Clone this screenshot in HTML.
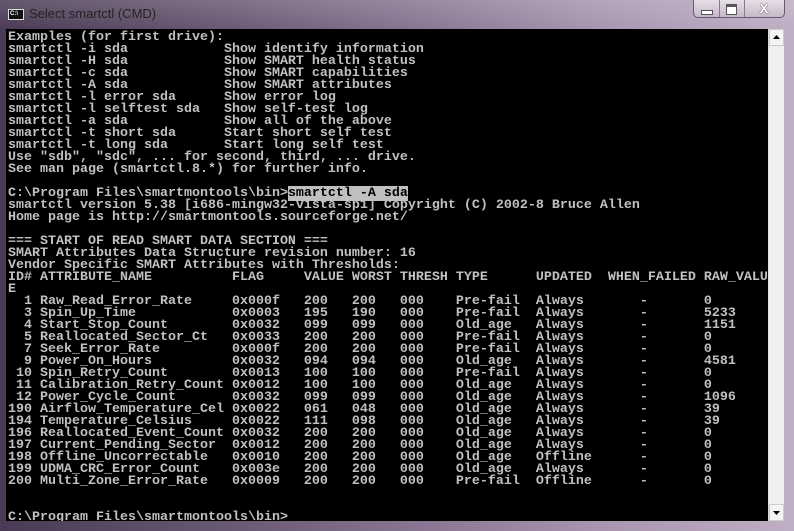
<!DOCTYPE html>
<html><head><meta charset="utf-8"><style>
html,body{margin:0;padding:0;width:794px;height:531px;overflow:hidden;background:#6a5670}
.frame{position:absolute;left:0;top:0;width:794px;height:531px;background:linear-gradient(90deg,#4a3a55 0%,#6b5a74 30%,#8c7894 55%,#a894ae 75%,#bfaec4 100%)}
.tb{position:absolute;left:0;top:0;width:794px;height:30px;background:linear-gradient(180deg,rgba(255,255,255,.15),rgba(255,255,255,0))}
.ico{position:absolute;left:8px;top:9px;width:16px;height:11px;background:#111;border:1px solid #ddd;box-sizing:border-box;color:#fff;font:bold 6px "Liberation Sans",sans-serif;line-height:9px;padding-left:1px}
.title{position:absolute;left:29px;top:6px;font:13px "Liberation Sans",sans-serif;color:#222}
.btns{position:absolute;left:693px;top:0;width:92px;height:18px;border:1px solid #6a5a70;border-top:none;border-radius:0 0 5px 5px;background:linear-gradient(180deg,#e8dfe9,#c5b7c8);box-sizing:border-box}
.btns div{position:absolute;top:0;height:17px;border-right:1px solid #8a7a8f}
.con{position:absolute;left:6px;top:29px;width:762px;height:492px;background:#000;overflow:hidden}
pre{margin:0;position:absolute;left:2px;top:3px;font-family:"Liberation Mono",monospace;font-weight:bold;font-size:13.33px;line-height:12px;color:#c0c0c0}
.hl{background:#c0c0c0;color:#000}
.sb{position:absolute;left:768px;top:29px;width:16px;height:492px;background:#f0f0f0;border-left:1px solid #ddd;box-sizing:border-box}
.ar{position:absolute;left:0;width:15px;height:17px;background:#f4f4f4;border:1px solid #ccc;box-sizing:border-box}
</style></head><body>
<div class="frame"></div><div class="tb"></div>
<div class="ico">C:\</div>
<div class="title">Select smartctl (CMD)</div>
<div class="btns"><div style="left:0;width:25px"><span style="position:absolute;left:7px;top:10px;width:10px;height:3px;background:#fff;border:1px solid #555"></span></div><div style="left:25px;width:25px"><span style="position:absolute;left:7px;top:4px;width:9px;height:7px;border:1px solid #555;border-top:3px solid #555;background:#fff"></span></div><div style="left:50px;width:40px;border:none;text-align:center;font:bold 13px 'Liberation Sans',sans-serif;color:#fff;text-shadow:0 0 1px #333,0 0 1px #333;line-height:17px">X</div></div>
<div class="con"><pre>Examples (for first drive):
smartctl -i sda            Show identify information
smartctl -H sda            Show SMART health status
smartctl -c sda            Show SMART capabilities
smartctl -A sda            Show SMART attributes
smartctl -l error sda      Show error log
smartctl -l selftest sda   Show self-test log
smartctl -a sda            Show all of the above
smartctl -t short sda      Start short self test
smartctl -t long sda       Start long self test
Use "sdb", "sdc", ... for second, third, ... drive.
See man page (smartctl.8.*) for further info.

C:\Program Files\smartmontools\bin&gt;<span class="hl">smartctl -A sda</span>
smartctl version 5.38 [i686-mingw32-vista-sp1] Copyright (C) 2002-8 Bruce Allen
Home page is http://smartmontools.sourceforge.net/

=== START OF READ SMART DATA SECTION ===
SMART Attributes Data Structure revision number: 16
Vendor Specific SMART Attributes with Thresholds:
ID# ATTRIBUTE_NAME          FLAG     VALUE WORST THRESH TYPE      UPDATED  WHEN_FAILED RAW_VALU
E
  1 Raw_Read_Error_Rate     0x000f   200   200   000    Pre-fail  Always       -       0
  3 Spin_Up_Time            0x0003   195   190   000    Pre-fail  Always       -       5233
  4 Start_Stop_Count        0x0032   099   099   000    Old_age   Always       -       1151
  5 Reallocated_Sector_Ct   0x0033   200   200   000    Pre-fail  Always       -       0
  7 Seek_Error_Rate         0x000f   200   200   000    Pre-fail  Always       -       0
  9 Power_On_Hours          0x0032   094   094   000    Old_age   Always       -       4581
 10 Spin_Retry_Count        0x0013   100   100   000    Pre-fail  Always       -       0
 11 Calibration_Retry_Count 0x0012   100   100   000    Old_age   Always       -       0
 12 Power_Cycle_Count       0x0032   099   099   000    Old_age   Always       -       1096
190 Airflow_Temperature_Cel 0x0022   061   048   000    Old_age   Always       -       39
194 Temperature_Celsius     0x0022   111   098   000    Old_age   Always       -       39
196 Reallocated_Event_Count 0x0032   200   200   000    Old_age   Always       -       0
197 Current_Pending_Sector  0x0012   200   200   000    Old_age   Always       -       0
198 Offline_Uncorrectable   0x0010   200   200   000    Old_age   Offline      -       0
199 UDMA_CRC_Error_Count    0x003e   200   200   000    Old_age   Always       -       0
200 Multi_Zone_Error_Rate   0x0009   200   200   000    Pre-fail  Offline      -       0


C:\Program Files\smartmontools\bin&gt;</pre></div>
<div class="sb">
<div class="ar" style="top:0"><svg width="13" height="15"><path d="M3 9 L6.5 5 L10 9 Z" fill="#000"/></svg></div>
<div class="ar" style="bottom:0"><svg width="13" height="15"><path d="M3 6 L6.5 10 L10 6 Z" fill="#000"/></svg></div>
</div>
</body></html>
